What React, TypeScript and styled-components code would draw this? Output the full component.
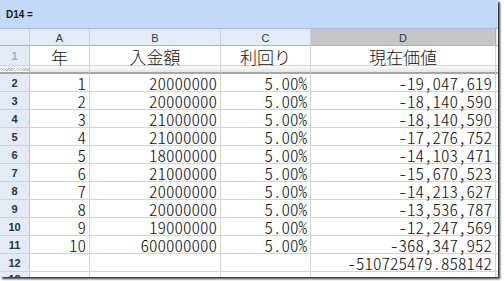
import React from "react";
import styled, { createGlobalStyle } from "styled-components";

const Global = createGlobalStyle`
  html, body { margin: 0; padding: 0; background: #fff; }
  body { width: 504px; height: 281px; overflow: hidden; }
`;

const Frame = styled.div`
  width: 498px;
  height: 277px;
  overflow: hidden;
  display: flex;
  flex-direction: column;
  background: #fff;
  box-shadow: 2px 2px 2px rgba(0, 0, 0, 0.8);
`;

const FormulaBar = styled.div`
  height: 28px;
  flex: none;
  display: flex;
  align-items: center;
  padding-left: 6px;
  background: #c4d9f8;
  border-bottom: 1px solid #a3bde6;
  font: bold 10px "Liberation Sans", Arial, sans-serif;
  color: #1a1a1a;
`;

const Sheet = styled.div`
  flex: 1;
  display: grid;
  grid-template-columns: 30px 60px 131px 90px 185px 1fr;
  grid-template-rows: 17px 20px 8px repeat(11, 18px) 1fr;
`;

const ColHead = styled.div<{ $sel?: boolean }>`
  box-sizing: border-box;
  display: flex;
  align-items: center;
  justify-content: center;
  background: ${(p) => (p.$sel ? "#c6c6c6" : "#e4ebf6")};
  border-right: 1px solid ${(p) => (p.$sel ? "#b0b0b0" : "#c9d4e3")};
  border-bottom: 1px solid #9fb8d6;
  font: 11px "Liberation Sans", Arial, sans-serif;
  color: #2c3a4f;
  padding-top: 1px;
`;

const Corner = styled(ColHead)`
  background: #e4ebf6;
  border-right: 1px solid #c9d4e3;
`;

const RowHead = styled.div<{ $dim?: boolean }>`
  box-sizing: border-box;
  display: flex;
  align-items: center;
  justify-content: center;
  overflow: hidden;
  background: #e4ebf6;
  border-right: 1px solid #b9c8db;
  border-bottom: 1px solid #c9d4e3;
  font: bold 11px "Liberation Sans", Arial, sans-serif;
  color: ${(p) => (p.$dim ? "#a7aeb8" : "#25324a")};
  padding-top: 1px;
`;

const Cell = styled.div<{ $center?: boolean }>`
  box-sizing: border-box;
  display: flex;
  align-items: flex-end;
  justify-content: ${(p) => (p.$center ? "center" : "flex-end")};
  padding-right: ${(p) => (p.$center ? "0" : "3px")};
  border-right: 1px solid #d4d4d4;
  border-bottom: 1px solid #d4d4d4;
  font-family: "Noto Sans CJK JP", "Noto Sans Mono CJK JP", monospace;
  font-weight: 300;
  font-feature-settings: "hwid" 1;
  font-size: 17px;
  line-height: 17px;
  color: #111;
  white-space: nowrap;
`;

const SplitHead = styled.div`
  box-sizing: border-box;
  border-top: 1px solid #f4f4f4;
  border-right: 1px solid #c0c0c0;
  border-bottom: 2px solid #a6a6a6;
  background: repeating-linear-gradient(
    135deg,
    #f2f2f2 0px,
    #f2f2f2 1px,
    #b8b8b8 1px,
    #b8b8b8 2px
  );
  background-clip: content-box;
  padding: 1px 0;
`;

const SplitCell = styled.div`
  box-sizing: border-box;
  border-right: 1px solid #d0d0d0;
  border-bottom: 2px solid #a6a6a6;
  background: linear-gradient(#fbfbfb, #e6e6e6);
`;

const headers = ["A", "B", "C", "D"];
const titles = ["年", "入金額", "利回り", "現在価値"];

const rows: [string, string, string, string][] = [
  ["1", "20000000", "5.00%", "-19,047,619"],
  ["2", "20000000", "5.00%", "-18,140,590"],
  ["3", "21000000", "5.00%", "-18,140,590"],
  ["4", "21000000", "5.00%", "-17,276,752"],
  ["5", "18000000", "5.00%", "-14,103,471"],
  ["6", "21000000", "5.00%", "-15,670,523"],
  ["7", "20000000", "5.00%", "-14,213,627"],
  ["8", "20000000", "5.00%", "-13,536,787"],
  ["9", "19000000", "5.00%", "-12,247,569"],
  ["10", "600000000", "5.00%", "-368,347,952"],
  ["", "", "", "-510725479.858142"],
];

export default function App() {
  return (
    <>
      <Global />
      <Frame>
        <FormulaBar>D14 =</FormulaBar>
        <Sheet>
          <Corner />
          {headers.map((h) => (
            <ColHead key={h} $sel={h === "D"}>
              {h}
            </ColHead>
          ))}
          <ColHead />

          <RowHead $dim>1</RowHead>
          {titles.map((t) => (
            <Cell key={t} $center>
              {t}
            </Cell>
          ))}
          <Cell />

          <SplitHead />
          {[0, 1, 2, 3, 4].map((i) => (
            <SplitCell key={i} />
          ))}

          {rows.map((r, i) => (
            <React.Fragment key={i}>
              <RowHead>{i + 2}</RowHead>
              {r.map((v, j) => (
                <Cell key={j}>{v}</Cell>
              ))}
              <Cell />
            </React.Fragment>
          ))}

          <RowHead>13</RowHead>
          {[0, 1, 2, 3, 4].map((i) => (
            <Cell key={i} />
          ))}
        </Sheet>
      </Frame>
    </>
  );
}
